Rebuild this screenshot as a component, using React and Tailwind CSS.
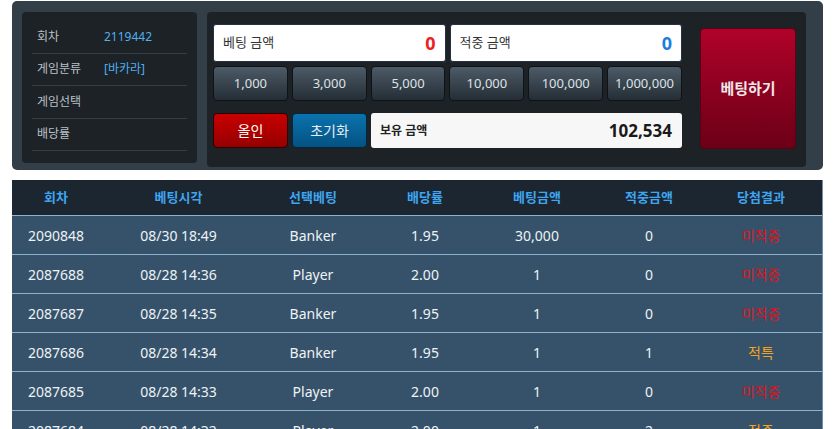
import React from "react";

const chips = ["1,000", "3,000", "5,000", "10,000", "100,000", "1,000,000"];

const info = [
  { label: "회차", value: "2119442" },
  { label: "게임분류", value: "[바카라]" },
  { label: "게임선택", value: "" },
  { label: "배당률", value: "" },
];

const rows = [
  ["2090848", "08/30 18:49", "Banker", "1.95", "30,000", "0", "미적중"],
  ["2087688", "08/28 14:36", "Player", "2.00", "1", "0", "미적중"],
  ["2087687", "08/28 14:35", "Banker", "1.95", "1", "0", "미적중"],
  ["2087686", "08/28 14:34", "Banker", "1.95", "1", "1", "적특"],
  ["2087685", "08/28 14:33", "Player", "2.00", "1", "0", "미적중"],
  ["2087684", "08/28 14:32", "Player", "2.00", "1", "2", "적중"],
];

const heads = ["회차", "베팅시각", "선택베팅", "배당률", "베팅금액", "적중금액", "당첨결과"];

function resultClass(r) {
  if (r === "미적중") return "text-[#e3121c]";
  return "text-[#f2a321]";
}

export default function App() {
  return (
    <div
      className="w-[835px] h-[429px] overflow-hidden bg-white"
      style={{ fontFamily: '"Noto Sans", "Noto Sans CJK KR", sans-serif' }}
    >
      {/* betting panel */}
      <div className="mx-3 mt-px h-[169px] rounded-[5px] bg-[#323e48] pt-[11px] pl-[10px] pr-[11px] flex gap-[10px] items-start">
        {/* round info */}
        <div className="w-[175px] h-[151px] rounded-[4px] bg-[#1d2227] px-[10px] pt-[9px]">
          {info.map((it) => (
            <div
              key={it.label}
              className="h-[32.5px] flex items-center border-b border-[#343c44] pl-[5px]"
            >
              <span className="w-[67px] text-[12px] text-[#b9c0c6]">{it.label}</span>
              <span className="text-[12px] text-[#4fb0ee]">{it.value}</span>
            </div>
          ))}
        </div>

        {/* bet controls */}
        <div className="w-[599px] h-[155px] rounded-[4px] bg-[#1d2227] pl-[6px] pt-[12px] pr-[10px] flex">
          <div className="w-[469px] flex flex-col">
            <div className="flex gap-[4px] h-[38px]">
              <div className="flex-1 bg-white rounded-[3px] border border-[#26304a] flex items-center justify-between px-[9px]">
                <span className="text-[13px] text-[#333]">베팅 금액</span>
                <span className="text-[18px] font-bold text-[#ee1c24]">0</span>
              </div>
              <div className="flex-1 bg-white rounded-[3px] border border-[#26304a] flex items-center justify-between px-[9px]">
                <span className="text-[13px] text-[#333]">적중 금액</span>
                <span className="text-[18px] font-bold text-[#1a7fe0]">0</span>
              </div>
            </div>
            <div className="mt-[4px] flex gap-[4px] h-[35px]">
              {chips.map((c) => (
                <div
                  key={c}
                  className="flex-1 rounded-[4px] border border-[#0f1316] bg-gradient-to-b from-[#4d5b68] to-[#252e36] flex items-center justify-center text-[13px] text-[#dde2e6]"
                >
                  {c}
                </div>
              ))}
            </div>
            <div className="mt-[12px] flex gap-[4px] h-[35px]">
              <div className="w-[75px] rounded-[4px] border border-[#2a0000] bg-gradient-to-b from-[#c90000] to-[#950000] flex items-center justify-center text-[14px] text-white">
                올인
              </div>
              <div className="w-[75px] rounded-[4px] border border-[#04263d] bg-gradient-to-b from-[#0a73ad] to-[#055283] flex items-center justify-center text-[14px] text-[#e6eef4]">
                초기화
              </div>
              <div className="flex-1 bg-[#f7f7f7] rounded-[3px] flex items-center justify-between pl-[9px] pr-[10px]">
                <span className="text-[12px] font-bold text-[#222]">보유 금액</span>
                <span className="text-[17px] font-bold text-[#1a1a1a]">102,534</span>
              </div>
            </div>
          </div>
          <div className="ml-[18px] mt-[4px] w-[96px] h-[121px] rounded-[4px] border border-[#5a0012] bg-gradient-to-b from-[#b0022a] to-[#6c0016] flex items-center justify-center text-[15px] font-bold text-[#f3e7ea]">
            베팅하기
          </div>
        </div>
      </div>

      {/* betting history */}
      <div className="mx-3 mt-[10px] border-r border-[#6f8ca2]">
        <div className="grid grid-cols-[88px_157px_repeat(5,112px)] h-[35px] bg-[#1b2631] items-center">
          {heads.map((h) => (
            <div key={h} className="text-center text-[13px] font-bold text-[#3ea5f0]">
              {h}
            </div>
          ))}
        </div>
        {rows.map((r) => (
          <div
            key={r[0]}
            className="grid grid-cols-[88px_157px_repeat(5,112px)] h-[39px] border-t border-[#8db2cf] bg-[#36526a] items-center"
          >
            {r.map((c, i) => (
              <div
                key={i}
                className={
                  "text-center text-[14px] " +
                  (i === 6 ? resultClass(c) : "text-[#eef2f5]")
                }
              >
                {c}
              </div>
            ))}
          </div>
        ))}
      </div>
    </div>
  );
}
